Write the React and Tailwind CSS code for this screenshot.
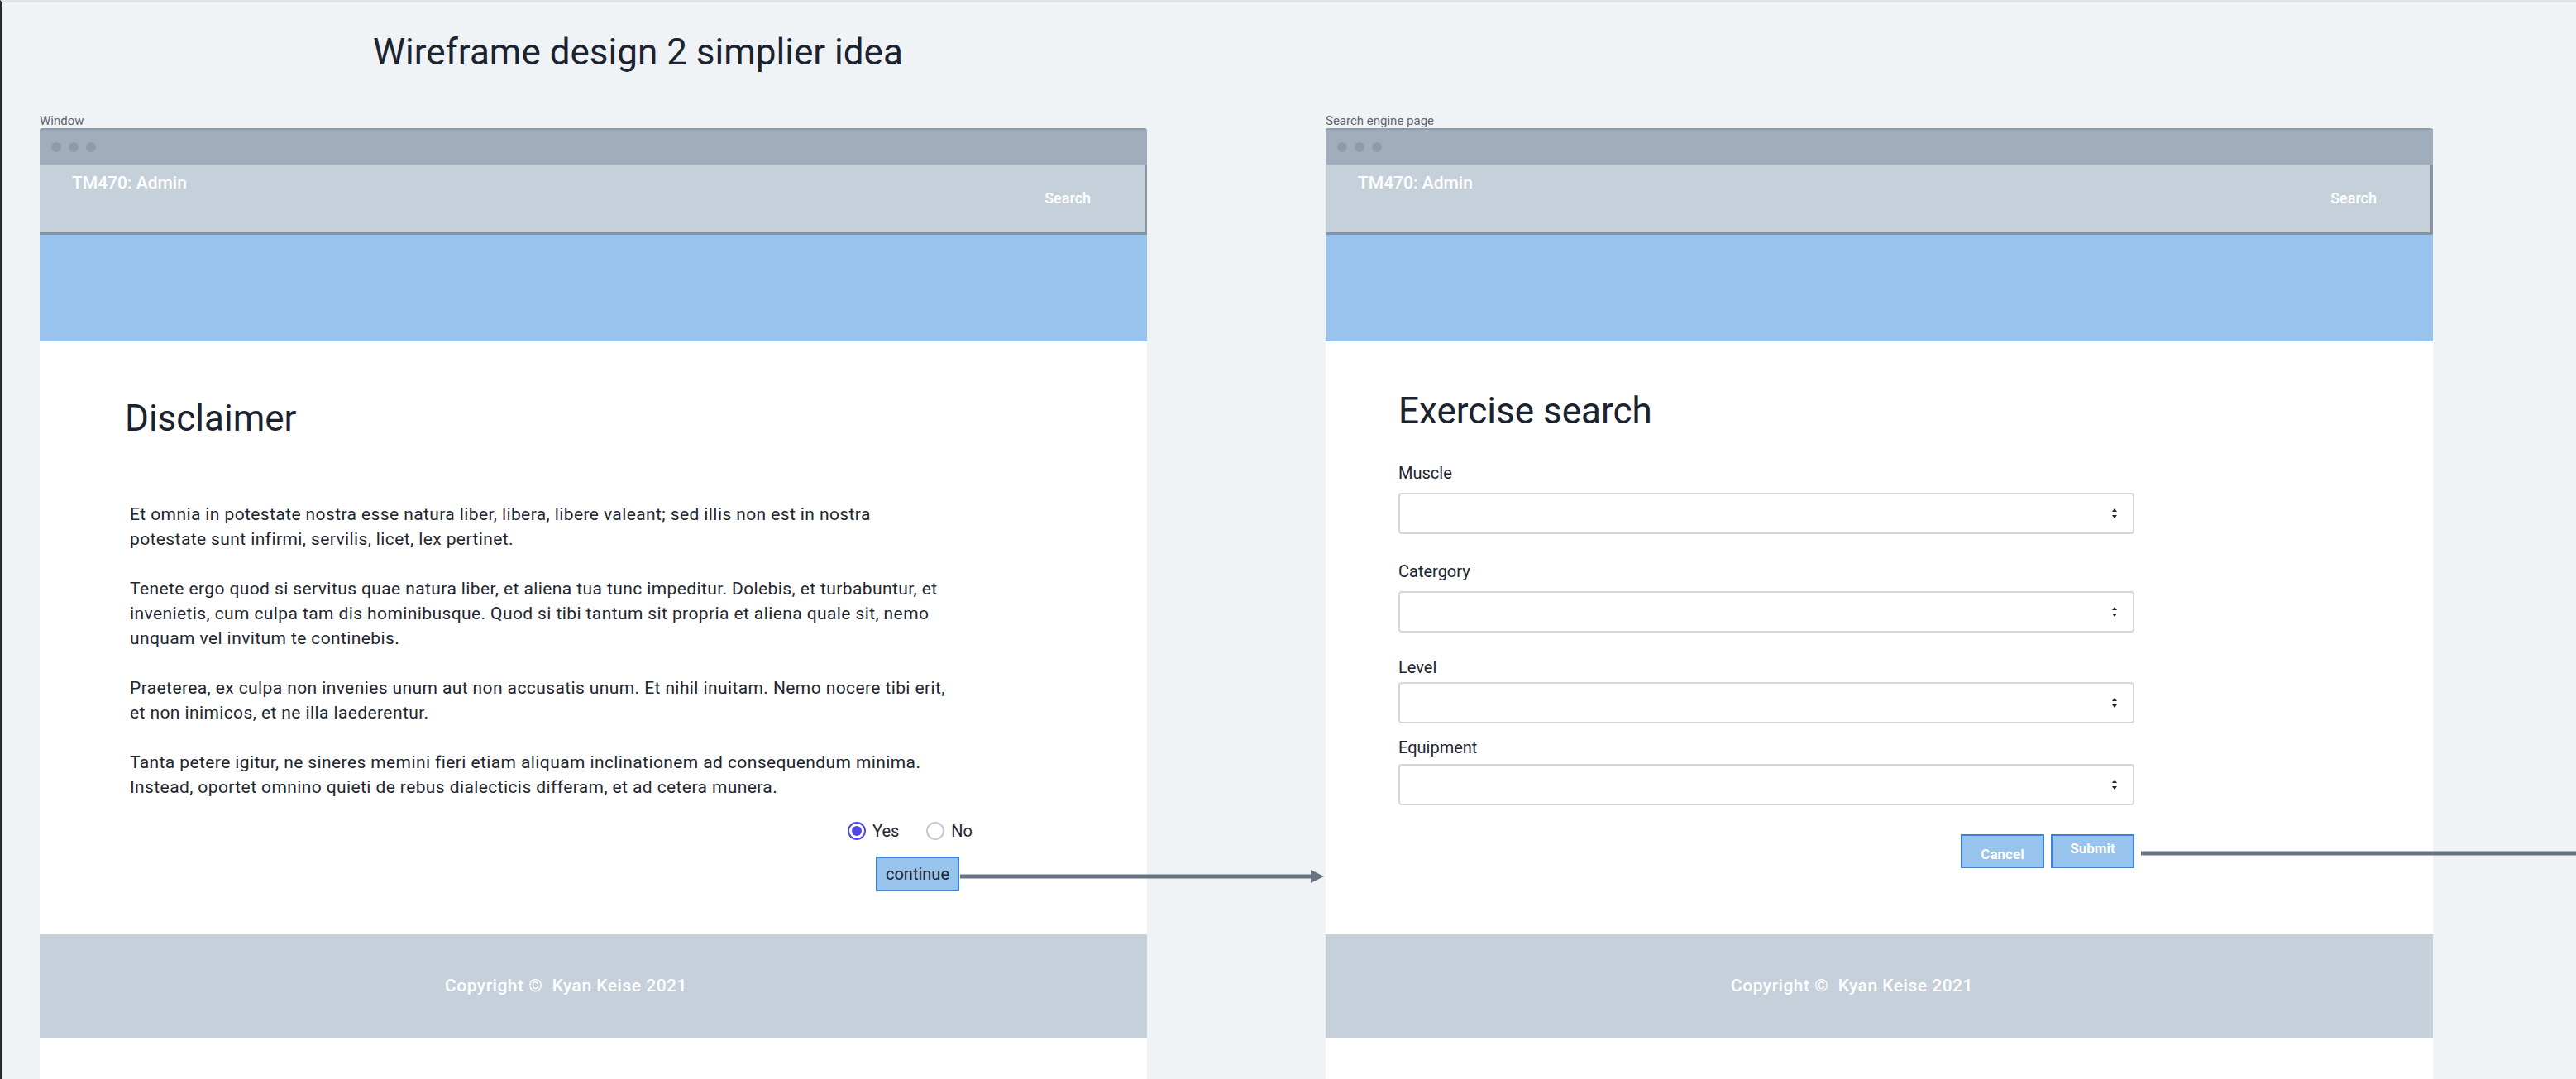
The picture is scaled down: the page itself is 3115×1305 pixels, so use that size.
import React from 'react';

const paragraphs = [
  [
    'Et omnia in potestate nostra esse natura liber, libera, libere valeant; sed illis non est in nostra',
    'potestate sunt infirmi, servilis, licet, lex pertinet.',
  ],
  [
    'Tenete ergo quod si servitus quae natura liber, et aliena tua tunc impeditur. Dolebis, et turbabuntur, et',
    'invenietis, cum culpa tam dis hominibusque. Quod si tibi tantum sit propria et aliena quale sit, nemo',
    'unquam vel invitum te continebis.',
  ],
  [
    'Praeterea, ex culpa non invenies unum aut non accusatis unum. Et nihil inuitam. Nemo nocere tibi erit,',
    'et non inimicos, et ne illa laederentur.',
  ],
  [
    'Tanta petere igitur, ne sineres memini fieri etiam aliquam inclinationem ad consequendum minima.',
    'Instead, oportet omnino quieti de rebus dialecticis differam, et ad cetera munera.',
  ],
];

const SelectBox = () => (
  <div className="flex h-[50px] w-[890px] items-center justify-end rounded-[4px] border-2 border-[#d3d7de] bg-white pr-[18px]">
    <svg width="8" height="14" viewBox="0 0 8 14">
      <path d="M4 1 L7 5 L1 5 Z" fill="#222" />
      <path d="M4 13 L7 9 L1 9 Z" fill="#222" />
    </svg>
  </div>
);

const Window = ({ label, children }) => (
  <div className="flex w-[1339px] flex-col">
    <div className="h-[18px] text-[15px] leading-[18px] text-[#5c6670]">{label}</div>
    <div className="flex h-[44px] items-center gap-[9px] rounded-t-[3px] border-t-2 border-[#8f9cab] bg-[#a0adbc] pl-[14px]">
      <span className="h-[12px] w-[12px] rounded-full bg-[#8e9bab]" />
      <span className="h-[12px] w-[12px] rounded-full bg-[#8e9bab]" />
      <span className="h-[12px] w-[12px] rounded-full bg-[#8e9bab]" />
    </div>
    <div className="h-[85px] border-b-[3px] border-r-[3px] border-[#8894a2] bg-[#c5d0da]">
      <div className="pl-[39px] pt-[9px] text-[21px] font-medium leading-[26px] text-white">TM470: Admin</div>
      <div className="-mt-[5px] flex justify-end pr-[65px] text-[18px] font-medium leading-[22px] text-white">Search</div>
    </div>
    <div className="h-[129px] bg-[#97c3ec]" />
    <div className="h-[717px] bg-white">{children}</div>
    <div className="flex h-[126px] items-center justify-center bg-[#c5d0da] pr-[66px] text-[21px] font-medium tracking-[0.5px] text-white">
      Copyright ©&nbsp;&nbsp;Kyan Keise 2021
    </div>
    <div className="h-[60px] bg-white" />
  </div>
);

const Field = ({ label, labelTop, selectTop }) => (
  <div className="flex flex-col">
    <div style={{ marginTop: labelTop }} className="text-[20px] leading-[24px] text-[#1d2430]">
      {label}
    </div>
    <div style={{ marginTop: selectTop }}>
      <SelectBox />
    </div>
  </div>
);

export default function App() {
  return (
    <div className="relative h-[1305px] w-[3115px] overflow-hidden border-l-[3px] border-t-[3px] border-l-[#2a2a2a] border-t-[#dfe4e9] bg-[#eff3f6] font-['Roboto',sans-serif]">
      {/* Title */}
      <h1 className="pl-[448px] pt-[34px] text-[44px] font-normal leading-[52px] text-[#1b2230]">
        Wireframe design 2 simplier idea
      </h1>

      <div className="mt-[48px] flex gap-[216px] pl-[45px]">
        {/* Disclaimer window */}
        <Window label="Window">
          <div className="pl-[103px] pt-[67px] text-[44px] leading-[52px] text-[#1b2230]">Disclaimer</div>
          <div className="mt-[75px] pl-[109px] text-[21px] leading-[30px] tracking-[0.4px] text-[#1f2631]">
            {paragraphs.map((p, i) => (
              <div key={i} className={i > 0 ? 'mt-[30px]' : ''}>
                {p.map((line, j) => (
                  <div key={j} className="whitespace-nowrap">{line}</div>
                ))}
              </div>
            ))}
          </div>
          <div className="mt-[23px] flex items-center pl-[977px] text-[20px] text-[#1f2631]">
            <span className="flex h-[22px] w-[22px] items-center justify-center rounded-full border-2 border-[#4f46e5]">
              <span className="h-[12px] w-[12px] rounded-full bg-[#4f46e5]" />
            </span>
            <span className="ml-[8px]">Yes</span>
            <span className="ml-[33px] h-[22px] w-[22px] rounded-full border-2 border-[#c8c8c8]" />
            <span className="ml-[8px]">No</span>
          </div>
          <div className="mt-[16px] pl-[1011px]">
            <div className="flex h-[42px] w-[101px] items-center justify-center border-2 border-[#3b82dd] bg-[#97c3ec] text-[20px] text-[#1f2631]">
              continue
            </div>
          </div>
        </Window>

        {/* Search window */}
        <Window label="Search engine page">
          <div className="pl-[88px]">
            <div className="pt-[58px] text-[44px] leading-[52px] text-[#1b2230]">Exercise search</div>
            <Field label="Muscle" labelTop={37} selectTop={12} />
            <Field label="Catergory" labelTop={33} selectTop={12} />
            <Field label="Level" labelTop={30} selectTop={6} />
            <Field label="Equipment" labelTop={17} selectTop={8} />
            <div className="mt-[35px] flex w-[890px] justify-end gap-[8px] text-[17px] font-bold text-white">
              <div className="flex h-[41px] w-[101px] items-center justify-center border-2 border-[#3b82dd] bg-[#97c3ec] pt-[8px]">
                Cancel
              </div>
              <div className="flex h-[41px] w-[101px] items-center justify-center border-2 border-[#3b82dd] bg-[#97c3ec] pb-[6px]">
                Submit
              </div>
            </div>
          </div>
        </Window>
      </div>

      {/* connectors */}
      <svg className="absolute left-[1158px] top-[1045px]" width="445" height="24" viewBox="0 0 445 24">
        <line x1="0" y1="12" x2="428" y2="12" stroke="#677483" strokeWidth="5" />
        <path d="M424 4 L440 12 L424 20 Z" fill="#677483" />
      </svg>
      <svg className="absolute left-[2586px] top-[1017px]" width="530" height="24" viewBox="0 0 530 24">
        <line x1="0" y1="12" x2="530" y2="12" stroke="#677483" strokeWidth="5" />
      </svg>
    </div>
  );
}
